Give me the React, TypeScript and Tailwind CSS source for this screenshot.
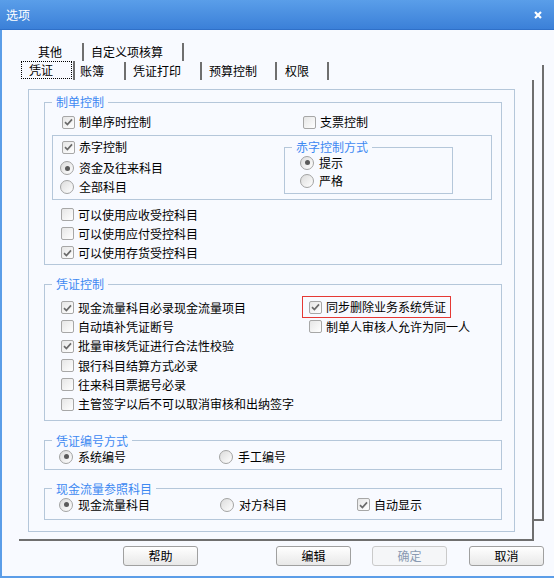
import React from "react";

const Check = ({ checked }: { checked?: boolean }) => (
  <span className="flex h-[13px] w-[13px] shrink-0 items-center justify-center rounded-[2px] border border-[#a7a7a7] bg-gradient-to-br from-[#e6e6e6] to-[#ffffff]">
    {checked && (
      <svg width="9" height="8" viewBox="0 0 9 8">
        <path d="M1 4.2l2.4 2.4L8 1.4" fill="none" stroke="#6a6a6a" strokeWidth="1.7" />
      </svg>
    )}
  </span>
);

const Radio = ({ checked }: { checked?: boolean }) => (
  <span className="flex h-[14px] w-[14px] shrink-0 items-center justify-center rounded-full border border-[#a3a3a3] bg-gradient-to-br from-[#dcdcdc] to-[#ffffff]">
    {checked && <span className="h-[5px] w-[5px] rounded-full bg-[#5a5a5a]" />}
  </span>
);

const Opt = ({
  radio,
  checked,
  label,
  className = "",
}: {
  radio?: boolean;
  checked?: boolean;
  label: string;
  className?: string;
}) => (
  <div className={`flex items-center ${radio ? "gap-[5px]" : "gap-[4px]"} ${className}`}>
    {radio ? <Radio checked={checked} /> : <Check checked={checked} />}
    <span className="whitespace-nowrap">{label}</span>
  </div>
);

const Legend = ({ text }: { text: string }) => (
  <legend className="ml-[7px] px-[4px] leading-[14px] text-[#3d89f2]">{text}</legend>
);

const Btn = ({ label, disabled, className = "" }: { label: string; disabled?: boolean; className?: string }) => (
  <div
    className={`flex h-[20px] w-[75px] items-center justify-center rounded-[3px] border ${
      disabled
        ? "border-[#cacaca] bg-[#f5f6f8] text-[#8a9ab2]"
        : "border-[#a0a0a0] bg-gradient-to-b from-[#ffffff] to-[#e8e8e8] text-black"
    } ${className}`}
  >
    {label}
  </div>
);

export default function App() {
  return (
    <div className="flex h-[578px] w-[554px] flex-col overflow-hidden font-['Noto_Sans_CJK_SC',sans-serif] text-[12px] leading-[14px] text-black">
      {/* title bar */}
      <div className="flex h-[30px] shrink-0 items-center justify-between border-b border-[#2f70c8] bg-gradient-to-b from-[#5a9ee9] to-[#3b80d8] pl-[6px] pr-[12px] text-white">
        <span className="text-[12px]">选项</span>
        <svg width="8" height="8" viewBox="0 0 8 8">
          <path d="M1 1l6 6M7 1L1 7" stroke="#fff" strokeWidth="2.2" />
        </svg>
      </div>

      <div className="flex flex-1 flex-col border-b-2 border-l-2 border-[#5b9de8] bg-[#f8faff] pt-[13px]">
        <div className="ml-[17px] flex items-start">
          <div className="w-[515px]">
            {/* back tab row */}
            <div className="flex h-[18px] pl-[11px]">
              <div className="flex w-[54px] items-center border-r-2 border-[#6f6f6f] pl-[8px]">其他</div>
              <div className="flex w-[100px] items-center border-r-2 border-[#6f6f6f] pl-[7px]">自定义项核算</div>
            </div>
            {/* front tab row */}
            <div className="flex h-[19px]">
              <div className="flex w-[56px] border-r-2 border-[#6f6f6f] pl-[2px]">
                <div className="flex h-[18px] w-[51px] items-center border border-dotted border-black pl-[7px]">凭证</div>
              </div>
              <div className="mt-[1px] flex w-[51px] items-center border-r-2 border-[#6f6f6f] pl-[5px]">账簿</div>
              <div className="mt-[1px] flex w-[76px] items-center border-r-2 border-[#6f6f6f] pl-[7px]">凭证打印</div>
              <div className="mt-[1px] flex w-[75px] items-center border-r-2 border-[#6f6f6f] pl-[7px]">预算控制</div>
              <div className="mt-[1px] flex w-[52px] items-center border-r-2 border-[#6f6f6f] pl-[8px]">权限</div>
            </div>
            {/* front page */}
            <div className="h-[461px] border-b-2 border-r-2 border-[#6f6f6f] pl-[9px] pt-[9px]">
              <div className="h-[443px] w-[487px] border border-[#b5c7da] pl-[15px] pr-[11px] pt-[5px]">
                {/* 制单控制 */}
                <fieldset className="w-[458px] border border-[#b5c7da] pb-[2px]">
                  <Legend text="制单控制" />
                  <div className="flex h-[18px] items-center pl-[17px] mt-[4px]">
                    <Opt checked label="制单序时控制" className="w-[241px]" />
                    <Opt label="支票控制" />
                  </div>
                  <div className="ml-[7px] mt-[4px] flex h-[65px] w-[440px] border border-[#b5c7da]">
                    <div className="w-[231px] pt-[2px]">
                      <Opt checked label="赤字控制" className="h-[18px] pl-[9px]" />
                      <Opt radio checked label="资金及往来科目" className="mt-[3px] h-[18px] pl-[7px]" />
                      <Opt radio label="全部科目" className="mt-[1px] h-[18px] pl-[7px]" />
                    </div>
                    <fieldset className="mt-[4px] h-[54px] w-[169px] border border-[#b5c7da]">
                      <Legend text="赤字控制方式" />
                      <Opt radio checked label="提示" className="h-[17px] pl-[15px]" />
                      <Opt radio label="严格" className="mt-[1px] h-[17px] pl-[15px]" />
                    </fieldset>
                  </div>
                  <div className="mt-[5px] pl-[16px]">
                    <Opt label="可以使用应收受控科目" className="h-[19px]" />
                    <Opt label="可以使用应付受控科目" className="h-[19px]" />
                    <Opt checked label="可以使用存货受控科目" className="h-[19px]" />
                  </div>
                </fieldset>

                {/* 凭证控制 */}
                <fieldset className="mt-[12px] w-[458px] border border-[#b5c7da]">
                  <Legend text="凭证控制" />
                  <div className="flex items-start">
                    <div className="w-[257px] pb-[6px] pl-[16px] pt-[7px]">
                      <Opt checked label="现金流量科目必录现金流量项目" className="h-[19.3px]" />
                      <Opt label="自动填补凭证断号" className="h-[19.3px]" />
                      <Opt checked label="批量审核凭证进行合法性校验" className="h-[19.3px]" />
                      <Opt label="银行科目结算方式必录" className="h-[19.3px]" />
                      <Opt label="往来科目票据号必录" className="h-[19.3px]" />
                      <Opt label="主管签字以后不可以取消审核和出纳签字" className="h-[19.3px]" />
                    </div>
                    <div className="pt-[5px]">
                      <div className="flex h-[22px] w-[149px] items-center border border-[#e53935] pl-[6px]">
                        <Opt checked label="同步删除业务系统凭证" />
                      </div>
                      <Opt label="制单人审核人允许为同一人" className="h-[17px] pl-[7px]" />
                    </div>
                  </div>
                </fieldset>

                {/* 凭证编号方式 */}
                <fieldset className="mt-[13px] w-[458px] border border-[#b5c7da] pb-[3px]">
                  <Legend text="凭证编号方式" />
                  <div className="flex h-[18px] items-center pl-[14px]">
                    <Opt radio checked label="系统编号" className="w-[160px]" />
                    <Opt radio label="手工编号" />
                  </div>
                </fieldset>

                {/* 现金流量参照科目 */}
                <fieldset className="mt-[12px] w-[458px] border border-[#b5c7da] pb-[5px]">
                  <Legend text="现金流量参照科目" />
                  <div className="flex h-[18px] items-center pl-[14px]">
                    <Opt radio checked label="现金流量科目" className="w-[161px]" />
                    <Opt radio label="对方科目" className="w-[137px]" />
                    <Opt checked label="自动显示" />
                  </div>
                </fieldset>
              </div>
            </div>
          </div>
          {/* back page edge */}
          <div className="mt-[22px] h-[456px] w-[10px] border-b-2 border-r-2 border-[#6f6f6f]" />
        </div>

        {/* buttons */}
        <div className="ml-[121px] mt-[5px] flex">
          <Btn label="帮助" />
          <Btn label="编辑" className="ml-[78px]" />
          <Btn label="确定" disabled className="ml-[21px]" />
          <Btn label="取消" className="ml-[22px]" />
        </div>
      </div>
    </div>
  );
}
